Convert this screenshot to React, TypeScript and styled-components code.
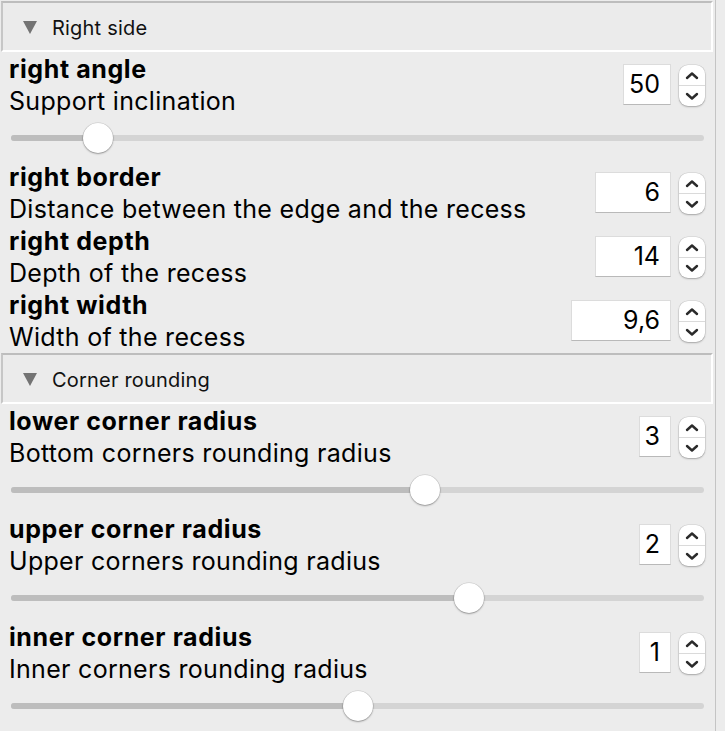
import styled, { createGlobalStyle } from "styled-components";

const GlobalStyle = createGlobalStyle`
  html, body {
    margin: 0;
    padding: 0;
    background: #ececec;
  }
  body {
    font-family: Inter, "Noto Sans", "Liberation Sans", sans-serif;
    color: #000;
  }
`;

type Param = {
  name: string;
  desc: string;
  value: string;
  boxWidth: number;
  slider?: number;
};

const sections: { title: string; params: Param[] }[] = [
  {
    title: "Right side",
    params: [
      { name: "right angle", desc: "Support inclination", value: "50", boxWidth: 48, slider: 0.109 },
      { name: "right border", desc: "Distance between the edge and the recess", value: "6", boxWidth: 76 },
      { name: "right depth", desc: "Depth of the recess", value: "14", boxWidth: 76 },
      { name: "right width", desc: "Width of the recess", value: "9,6", boxWidth: 100 },
    ],
  },
  {
    title: "Corner rounding",
    params: [
      { name: "lower corner radius", desc: "Bottom corners rounding radius", value: "3", boxWidth: 32, slider: 0.602 },
      { name: "upper corner radius", desc: "Upper corners rounding radius", value: "2", boxWidth: 32, slider: 0.668 },
      { name: "inner corner radius", desc: "Inner corners rounding radius", value: "1", boxWidth: 32, slider: 0.5 },
    ],
  },
];

const Stepper = () => (
  <StepperBox>
    <StepHalf>
      <svg width="14" height="9" viewBox="0 0 14 9">
        <path d="M2 7 L7 2.5 L12 7" fill="none" stroke="#2b2b2b" strokeWidth="2.4" strokeLinecap="round" strokeLinejoin="round" />
      </svg>
    </StepHalf>
    <StepHalf $bottom>
      <svg width="14" height="9" viewBox="0 0 14 9">
        <path d="M2 2 L7 6.5 L12 2" fill="none" stroke="#2b2b2b" strokeWidth="2.4" strokeLinecap="round" strokeLinejoin="round" />
      </svg>
    </StepHalf>
  </StepperBox>
);

const Slider = ({ value }: { value: number }) => {
  // thumb center runs from 15px to (width - 15px) of the track
  const pos = `calc(15px + (100% - 30px) * ${value})`;
  return (
    <SliderRow>
      <Track>
        <Fill style={{ width: pos }} />
        <Thumb style={{ left: pos }} />
      </Track>
    </SliderRow>
  );
};

export default function App() {
  return (
    <>
      <GlobalStyle />
      <Panel>
        {sections.map((s) => (
          <Section key={s.title}>
            <SectionHeader>
              <svg width="16" height="15" viewBox="0 0 16 15">
                <path d="M1 1 L15 1 L8 14 Z" fill="#737373" />
              </svg>
              <SectionTitle>{s.title}</SectionTitle>
            </SectionHeader>
            {s.params.map((p) => (
              <ParamBlock key={p.name}>
                <ParamHead>
                  <Labels>
                    <Name>{p.name}</Name>
                    <Desc>{p.desc}</Desc>
                  </Labels>
                  <Spin>
                    <ValueBox $w={p.boxWidth}>{p.value}</ValueBox>
                    <Stepper />
                  </Spin>
                </ParamHead>
                {p.slider !== undefined && <Slider value={p.slider} />}
              </ParamBlock>
            ))}
          </Section>
        ))}
      </Panel>
    </>
  );
}

const Panel = styled.div`
  width: 716px;
  height: 731px;
  border-right: 1px solid #c4c4c4;
  overflow: hidden;
  box-sizing: border-box;
`;

const Section = styled.section`
  display: flex;
  flex-direction: column;
`;

const SectionHeader = styled.div`
  display: flex;
  align-items: center;
  gap: 14px;
  height: 51px;
  box-sizing: border-box;
  margin: 1px 2px 0 1px;
  padding-left: 19px;
  padding-top: 2px;
  border-top: 2px solid #bdbdbd;
  border-left: 2px solid #c6c6c6;
  border-bottom: 2px solid #ffffff;
  border-right: 2px solid #ffffff;
  background: #ebebeb;
`;

const SectionTitle = styled.span`
  font-size: 20px;
  letter-spacing: 0.2px;
  color: #111;
`;

const ParamBlock = styled.div`
  display: flex;
  flex-direction: column;
`;

const ParamHead = styled.div`
  display: flex;
  align-items: center;
  justify-content: space-between;
  height: 64px;
  padding: 0 10px 0 9px;
`;

const Labels = styled.div`
  display: flex;
  flex-direction: column;
  padding-top: 2px;
`;

const Name = styled.div`
  font-size: 25px;
  line-height: 31px;
  font-weight: 700;
  letter-spacing: 0.6px;
`;

const Desc = styled.div`
  font-size: 25px;
  line-height: 32px;
  letter-spacing: 0.3px;
`;

const Spin = styled.div`
  display: flex;
  align-items: center;
  gap: 8px;
`;

const ValueBox = styled.div<{ $w: number }>`
  width: ${(p) => p.$w}px;
  height: 41px;
  box-sizing: border-box;
  background: #fff;
  border: 1px solid #dcdcdc;
  border-bottom-color: #b9b9b9;
  font-size: 25px;
  line-height: 39px;
  text-align: right;
  padding-right: 10px;
`;

const StepperBox = styled.div`
  display: flex;
  flex-direction: column;
  width: 26px;
  height: 41px;
  margin-top: 3px;
  border-radius: 9px;
  background: #fff;
  box-shadow: 0 0 0 0.5px rgba(0, 0, 0, 0.12), 0 1px 2px rgba(0, 0, 0, 0.25);
  overflow: hidden;
`;

const StepHalf = styled.div<{ $bottom?: boolean }>`
  flex: 1;
  display: flex;
  align-items: center;
  justify-content: center;
  border-top: ${(p) => (p.$bottom ? "1px solid #dadada" : "none")};
`;

const SliderRow = styled.div`
  height: 44px;
  display: flex;
  align-items: center;
  padding: 0 11px 0 11px;
`;

const Track = styled.div`
  position: relative;
  flex: 1;
  height: 6px;
  border-radius: 3px;
  background: #d4d4d4;
`;

const Fill = styled.div`
  height: 100%;
  border-radius: 3px;
  background: #bdbdbd;
`;

const Thumb = styled.div`
  position: absolute;
  top: 50%;
  width: 30px;
  height: 30px;
  border-radius: 50%;
  background: #fff;
  transform: translate(-50%, -50%);
  box-shadow: 0 0 0 0.5px rgba(0, 0, 0, 0.15), 0 1px 2px rgba(0, 0, 0, 0.3);
`;
